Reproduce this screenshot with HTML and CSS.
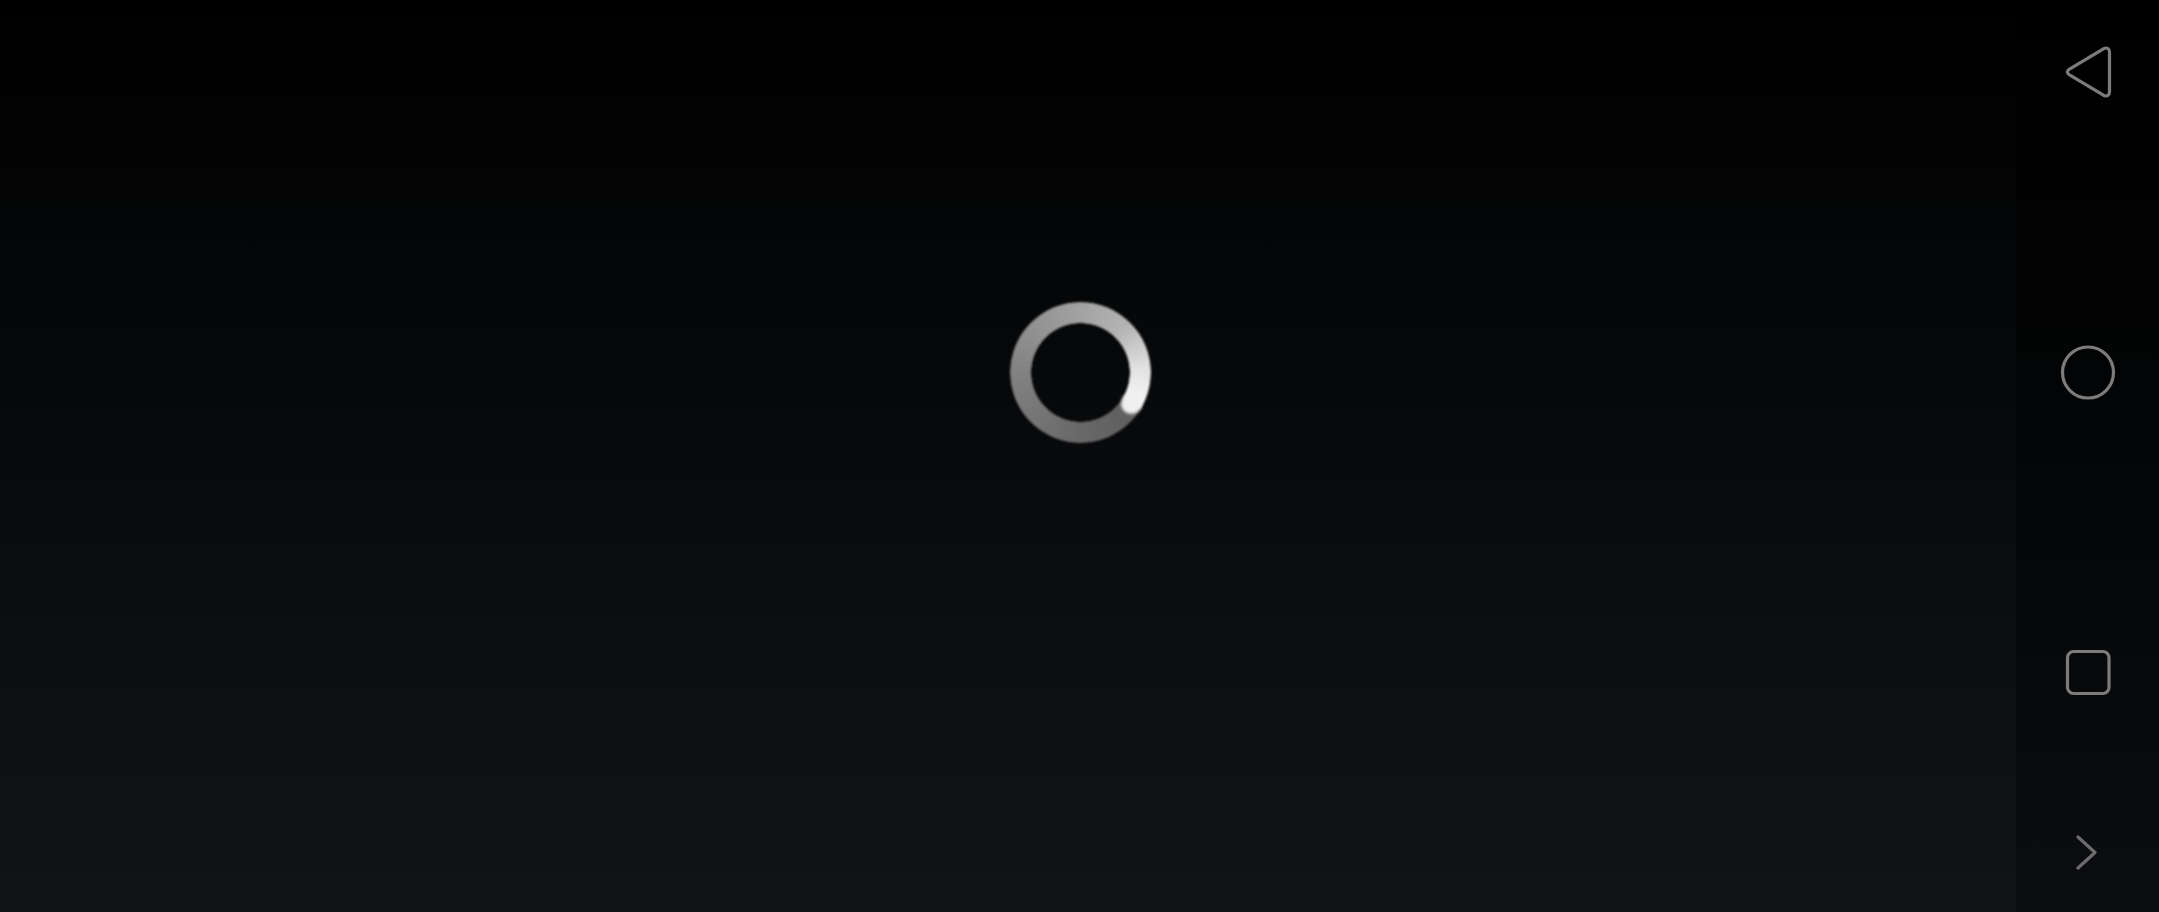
FILE: index.html
```html
<!DOCTYPE html>
<html lang="en">
<head>
    <meta charset="UTF-8">
    <meta name="viewport" content="width=device-width, initial-scale=1.0">
    <title>Loading</title>
    <link rel="stylesheet" href="styles.css">
</head>
<body>
    <div class="screen">
        <div class="spinner">
            <div class="spinner-ring"></div>
            <div class="spinner-head"></div>
        </div>
    </div>

    <div class="navbar">
        <svg class="nav-icon" viewBox="0 0 60 60">
            <path d="M11.5 27.2 L45.4 6.8 Q51 4.2 51.5 10 L51.5 50 Q51 55.8 45.4 53.2 L11.5 32.8 Q7.2 30 11.5 27.2 Z"/>
        </svg>
        <svg class="nav-icon" viewBox="0 0 60 60">
            <circle cx="30" cy="30.5" r="25.5"/>
        </svg>
        <svg class="nav-icon" viewBox="0 0 60 60">
            <rect x="9.5" y="9.5" width="41.5" height="42" rx="6" ry="6"/>
        </svg>
        <svg class="nav-icon nav-more" viewBox="0 0 60 60">
            <path d="M20 15 L37 30.5 L20 46"/>
        </svg>
    </div>
</body>
</html>
```

FILE: styles.css
```css
html, body{
    height: 100%;
}
body{
    margin: 0;
    padding: 0;
    height: 912px;
    overflow: hidden;
    display: flex;
    background-color: black;
}

.screen{
    flex: 1;
    padding: 302px 0 0 1009.5px;
    background: linear-gradient(to bottom, #000000 0%, #040506 25%, #07080a 42%, #0d0f12 75%, #111317 100%);
}

.spinner{
    position: relative;
    width: 141px;
    height: 141px;
    filter: blur(1px);
}
.spinner-ring{
    width: 100%;
    height: 100%;
    border-radius: 50%;
    background: conic-gradient(from 121deg, #5e5e5e 0deg, #686868 59deg, #828282 149deg, #a2a2a2 239deg, #b4b4b4 284deg, #e2e2e2 325deg, #f8f8f8 360deg);
    -webkit-mask: radial-gradient(circle, transparent 49px, black 49.5px);
    mask: radial-gradient(circle, transparent 49px, black 49.5px);
}
.spinner-head{
    position: absolute;
    left: 111px;
    top: 91px;
    width: 21px;
    height: 21px;
    border-radius: 50%;
    background-color: #f0f0f0;
    filter: blur(1px);
}

.navbar{
    width: 143px;
    height: 912px;
    box-sizing: border-box;
    padding-top: 42px;
    display: flex;
    flex-direction: column;
    align-items: center;
    background: linear-gradient(to bottom, #000000 0%, #030405 42%, #07090b 75%, #0b0d10 100%);
}
.nav-icon{
    width: 60px;
    height: 60px;
    margin-bottom: 240px;
    flex-shrink: 0;
    fill: none;
    stroke: #7c7c7c;
    stroke-width: 3.2;
    stroke-linecap: round;
    stroke-linejoin: round;
    filter: blur(0.5px);
}
.nav-icon:nth-child(3){
    margin-bottom: 120px;
}
.nav-more{
    margin-bottom: 0;
    stroke: #6c6c6c;
}
```
